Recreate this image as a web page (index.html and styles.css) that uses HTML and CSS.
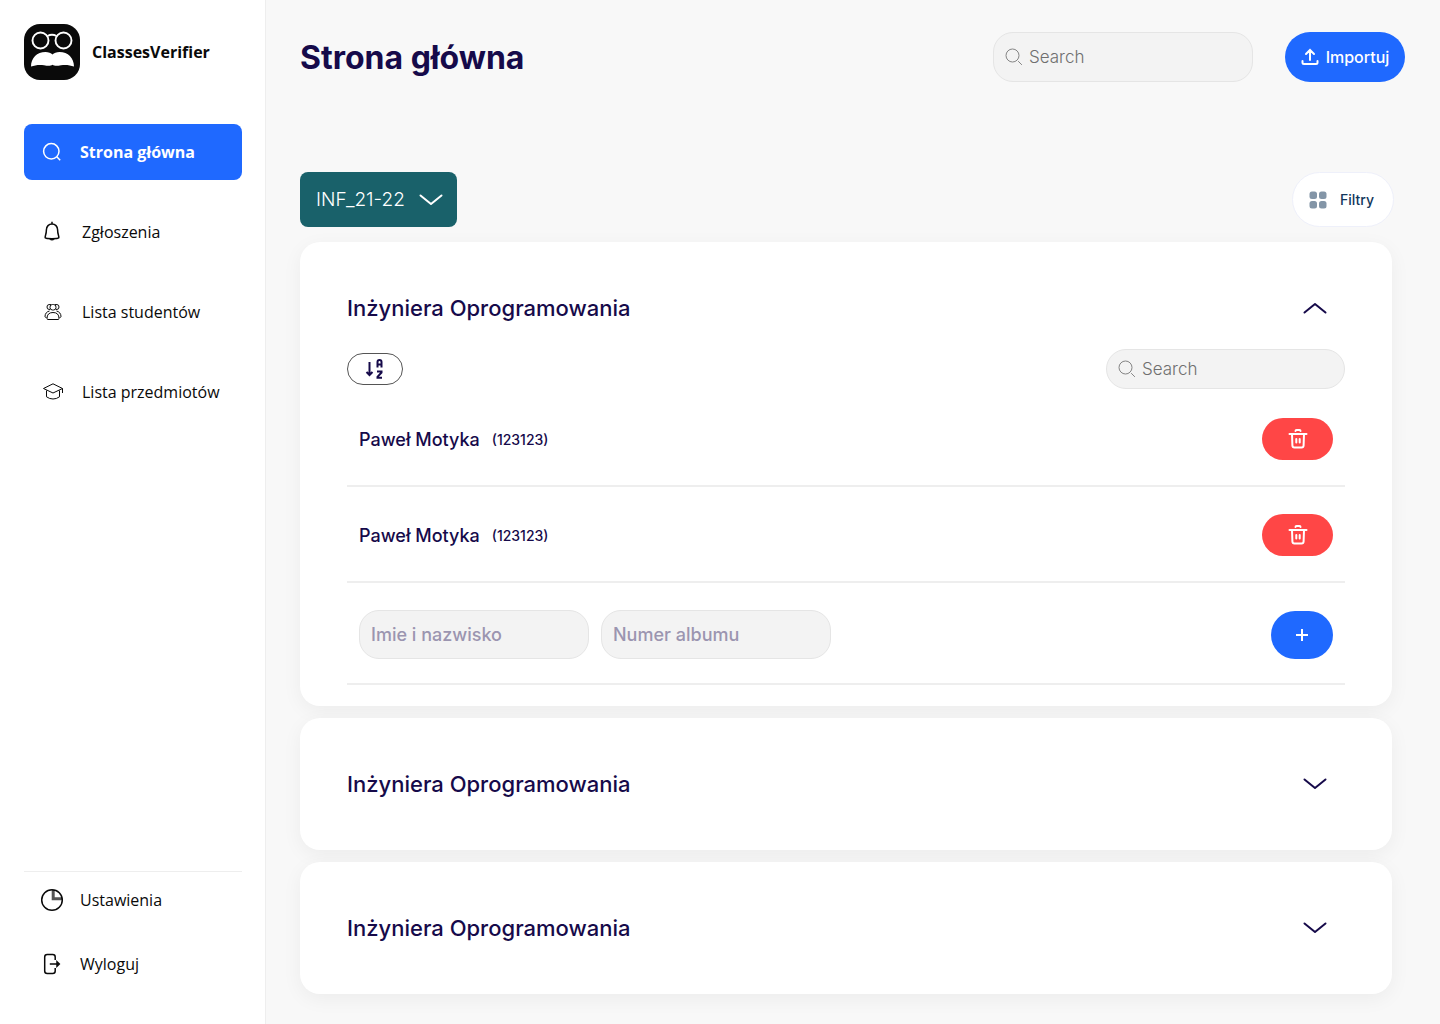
FILE: index.html
```html
<!DOCTYPE html>
<html lang="pl">
<head>
<meta charset="utf-8">
<meta name="viewport" content="width=device-width, initial-scale=1">
<title>ClassesVerifier – Strona główna</title>
<link rel="stylesheet" href="styles.css">
</head>
<body>
<svg class="sprite" aria-hidden="true">
  <symbol id="icon-search" viewBox="0 0 18 18"><circle cx="7.5" cy="7.5" r="6.5"/><path d="M13.200 13.200l3.700 3.700"/></symbol>
  <symbol id="icon-down" viewBox="0 0 24 12"><path d="M1.5 1.5L12 10L22.5 1.5"/></symbol>
  <symbol id="icon-up" viewBox="0 0 24 12"><path d="M1.5 10.5L12 2L22.5 10.5"/></symbol>
  <symbol id="icon-trash" viewBox="0 0 20 20"><path d="M1.500 5h17M7.500 2q0-1 1-1h3q1 0 1 1M4 5l.4 11.500q.1 2 2 2h7.200q1.900 0 2-2L16 5"/><path d="M8.300 10v3.500M11.700 10v3.500"/></symbol>
</svg>
<div class="layout">
  <aside class="sidebar">
    <div class="brand">
      <svg class="brand-logo" viewBox="0 0 56 56" aria-hidden="true">
        <rect width="56" height="56" rx="16" fill="#0a0a0a"/>
        <g fill="none" stroke="#fff" stroke-width="1.900"><circle cx="16.500" cy="16.500" r="8"/><circle cx="39.500" cy="16.500" r="8"/><path d="M23.500 12q4.500-2.600 9 0"/></g>
        <path fill="#fff" d="M7 42.500C7 34 13 28 21.500 28c3 0 5.500 1 7 2.500 1.500-1.500 4-2.500 7-2.500C44 28 50 34 50 42.500c-4-1.500-9-2-13-1.200-4 .7-6.500.9-8.500-.6-2 1.500-4.500 1.300-8.500.6-4-.8-9-.3-13 1.200z"/>
      </svg>
      <span>ClassesVerifier</span>
    </div>
    <nav class="nav">
      <a class="nav-item nav-item-active" href="#home">
        <svg class="nav-icon" viewBox="0 0 24 24"><circle cx="11.300" cy="11.300" r="7.700"/><path d="M16.800 16.800l3.400 3.400"/></svg>
        <span>Strona główna</span>
      </a>
      <a class="nav-item" href="#reports">
        <svg class="nav-icon nav-icon-wide" viewBox="0 0 24 24"><path d="M12 1.800v2M5.200 17.800c-.4-2 1.200-3 1.200-8C6.400 6.500 8.800 3.900 12 3.900s5.600 2.600 5.600 5.900c0 5 1.600 6 1.200 8-1 1.200-12.600 1.200-13.600 0zM9.800 19.200q2.200 1.200 4.400 0"/></svg>
        <span>Zgłoszenia</span>
      </a>
      <a class="nav-item" href="#students">
        <svg class="nav-icon nav-icon-wide nav-icon-thin" viewBox="0 0 24 24"><rect x="10" y="4.500" width="6" height="5.500" rx="2.500"/><path d="M10 9.400H9Q7 9.400 7 7T9 4.600h2M16 9.400h1q2 0 2-2.400t-2-2.400h-2"/><path d="M7 18.500q0-6 6-6t6 6q0 1-1 1H8q-1 0-1-1zM6.500 17.500q-1.500 0-1.500-1c0-2.800 1.800-5 4.500-5.500M19.500 17.500q1.500 0 1.500-1c0-2.800-1.800-5-4.500-5.500"/></svg>
        <span>Lista studentów</span>
      </a>
      <a class="nav-item" href="#subjects">
        <svg class="nav-icon nav-icon-wide nav-icon-thin" viewBox="0 0 24 24"><path d="M3.500 8.500L13 3.800l9.500 4.700L13 13zM22.500 8.500v4.500M6.500 10.500v6.300q3 2.200 6.500 2.200t6.500-2.200v-6.300"/></svg>
        <span>Lista przedmiotów</span>
      </a>
    </nav>
    <nav class="nav-bottom">
      <a class="nav-item" href="#settings">
        <svg class="nav-icon" viewBox="0 0 24 24"><path d="M13.200 2v8.800H22" stroke="#555" stroke-width="3"/><circle cx="12" cy="12" r="10.300"/></svg>
        <span>Ustawienia</span>
      </a>
      <a class="nav-item" href="#logout">
        <svg class="nav-icon" viewBox="0 0 24 24"><path d="M15.200 8V5q0-2.500-2.500-2.500H7.200Q4.700 2.500 4.700 5v14q0 2.500 2.500 2.500h5.500q2.500 0 2.500-2.500v-3M9.800 12H19"/><path d="M17 9.800l2.300 2.200-2.300 2.200z"/></svg>
        <span>Wyloguj</span>
      </a>
    </nav>
  </aside>

  <main class="main">
    <header class="topbar">
      <h1>Strona główna</h1>
      <label class="search search-top">
        <svg class="search-icon" aria-hidden="true"><use href="#icon-search"/></svg>
        <input type="search" placeholder="Search" aria-label="Search">
      </label>
      <button class="import" type="button">
        <svg class="import-icon" viewBox="0 0 18 18" aria-hidden="true"><path d="M9 12V3M5 6l4-4 4 4M1.500 13v1.500q0 1.500 1.500 1.500h12q1.500 0 1.500-1.500V13"/></svg>
        <span>Importuj</span>
      </button>
    </header>

    <div class="content">
      <div class="controls">
        <div class="group">
          <select class="group-select" aria-label="Grupa"><option>INF_21-22</option></select>
          <svg class="chevron group-chevron" aria-hidden="true"><use href="#icon-down"/></svg>
        </div>
        <button class="filters" type="button">
          <svg class="filters-icon" viewBox="0 0 18 18" aria-hidden="true"><rect x="0.500" y="0.500" width="7.500" height="7.500" rx="2.500"/><rect x="10" y="0.500" width="7.500" height="7.500" rx="2.500"/><rect x="0.500" y="10" width="7.500" height="7.500" rx="2.500"/><rect x="10" y="10" width="7.500" height="7.500" rx="2.500"/></svg>
          <span>Filtry</span>
        </button>
      </div>

      <div class="cards">
        <section class="card card-open">
          <div class="card-head">
            <h2>Inżyniera Oprogramowania</h2>
            <button class="toggle" type="button" aria-label="Zwiń" aria-expanded="true"><svg class="chevron"><use href="#icon-up"/></svg></button>
          </div>
          <div class="card-tools">
            <button class="sort" type="button" aria-label="Sortuj A–Z">
              <svg class="sort-icon" viewBox="0 0 20 22"><path d="M4.500 4v13M1.500 14l3 3 3-3M12.500 9.500V4q0-2 2-2t2 2v5.500M12.500 6.500h4M12 13.500h4.500v1l-4 4.300v1H17"/></svg>
            </button>
            <label class="search search-card">
              <svg class="search-icon" aria-hidden="true"><use href="#icon-search"/></svg>
              <input type="search" placeholder="Search" aria-label="Search">
            </label>
          </div>
          <ul class="students">
            <li class="student">
              <span class="name">Paweł Motyka</span><span class="number">(123123)</span>
              <button class="delete" type="button" aria-label="Usuń"><svg class="delete-icon"><use href="#icon-trash"/></svg></button>
            </li>
            <li class="student">
              <span class="name">Paweł Motyka</span><span class="number">(123123)</span>
              <button class="delete" type="button" aria-label="Usuń"><svg class="delete-icon"><use href="#icon-trash"/></svg></button>
            </li>
          </ul>
          <form class="add-form">
            <input class="field" type="text" placeholder="Imie i nazwisko" aria-label="Imie i nazwisko">
            <input class="field" type="text" placeholder="Numer albumu" aria-label="Numer albumu">
            <button class="add" type="button" aria-label="Dodaj"><svg class="add-icon" viewBox="0 0 12 12"><path d="M6 0v12M0 6h12"/></svg></button>
          </form>
        </section>
        <section class="card">
          <div class="card-head">
            <h2>Inżyniera Oprogramowania</h2>
            <button class="toggle" type="button" aria-label="Rozwiń" aria-expanded="false"><svg class="chevron"><use href="#icon-down"/></svg></button>
          </div>
        </section>
        <section class="card">
          <div class="card-head">
            <h2>Inżyniera Oprogramowania</h2>
            <button class="toggle" type="button" aria-label="Rozwiń" aria-expanded="false"><svg class="chevron"><use href="#icon-down"/></svg></button>
          </div>
        </section>
      </div>
    </div>
  </main>
</div>
</body>
</html>
```
FILE: styles.css
```css
* { box-sizing: border-box; }

body {
  margin: 0;
  background: #f8f8f8;
  color: #160a4a;
  font-family: Inter, sans-serif;
}

button, input, select { font: inherit; color: inherit; margin: 0; }
button { border: 0; padding: 0; background: none; cursor: pointer; }
svg { display: block; flex: none; fill: none; stroke: currentColor; }
.sprite { position: absolute; width: 0; height: 0; }

.layout { display: flex; min-height: 100vh; }

/* Sidebar */
.sidebar {
  display: flex;
  flex-direction: column;
  flex: none;
  width: 266px;
  padding: 24px 23px 32px 24px;
  background: #fff;
  border-right: 1px solid #eee;
  color: #0a0a0a;
  font-family: "Open Sans", sans-serif;
  font-size: 16px;
  line-height: 24px;
}
.brand { display: flex; align-items: center; gap: 12px; font-weight: 700; }
.brand-logo { width: 56px; height: 56px; stroke: none; }
.nav { display: flex; flex-direction: column; gap: 24px; margin-top: 44px; }
.nav-item {
  display: flex;
  align-items: center;
  gap: 16px;
  height: 56px;
  padding: 0 16px;
  border-radius: 8px;
  color: inherit;
  text-decoration: none;
}
.nav-item-active { background: #1f69ff; color: #fff; font-weight: 700; }
.nav-icon { width: 24px; height: 24px; stroke-width: 1.5; }
.nav-icon-wide { margin-right: 2px; }
.nav-icon-thin { stroke-width: 1; }
.nav-bottom {
  display: flex;
  flex-direction: column;
  gap: 8px;
  margin-top: auto;
  border-top: 1px solid #eee;
}

/* Top bar */
.main { flex: 1; min-width: 0; }
.topbar { display: flex; align-items: center; padding: 32px 35px 0 34px; }
h1 { margin: 0 auto 0 0; padding-top: 2px; font-size: 32px; font-weight: 700; line-height: 48px; }
.search {
  display: flex;
  align-items: center;
  gap: 6px;
  padding: 0 11px;
  background: #f3f3f3;
  border: 1px solid #e5e5e5;
  border-radius: 20px;
  color: #858585;
}
.search input {
  flex: 1;
  min-width: 0;
  padding: 0;
  border: 0;
  outline: 0;
  background: none;
  font-size: 17px;
  font-weight: 300;
  line-height: 24px;
}
.search input::placeholder { color: #6f6f6f; opacity: 1; }
.search-icon { width: 18px; height: 18px; }
.search-top { width: 260px; height: 50px; }
.search-card { width: 239px; height: 40px; }
.import {
  display: flex;
  align-items: center;
  justify-content: center;
  gap: 7px;
  width: 120px;
  height: 50px;
  margin-left: 32px;
  border-radius: 25px;
  background: #1f69ff;
  color: #fff;
  font-size: 16px;
  font-weight: 500;
}
.import-icon { width: 18px; height: 18px; stroke-width: 2; stroke-linecap: round; }

/* Content */
.content { padding: 90px 46px 30px 34px; }
.controls { display: flex; align-items: center; justify-content: space-between; margin-bottom: 15px; }
.group { display: grid; align-items: center; color: #fff; }
.group-select {
  grid-area: 1 / 1;
  width: 157px;
  height: 55px;
  padding: 0 16px;
  appearance: none;
  border: 0;
  border-radius: 8px;
  background: #19616a;
  font-size: 19px;
  font-weight: 300;
}
.group-chevron { grid-area: 1 / 1; justify-self: end; margin-right: 14px; pointer-events: none; }
.chevron { width: 24px; height: 12px; stroke-width: 2; stroke-linecap: round; stroke-linejoin: round; }
.filters {
  display: flex;
  align-items: center;
  gap: 13px;
  width: 102px;
  height: 55px;
  padding: 0 16px;
  border: 1px solid #eef0fa;
  border-radius: 28px;
  background: #fff;
  color: #12375c;
  font-size: 14px;
  font-weight: 500;
}
.filters-icon { width: 18px; height: 18px; fill: #8395a7; stroke: none; }

.cards { display: flex; flex-direction: column; gap: 12px; margin-right: 2px; }
.card {
  padding: 50px 47px;
  border-radius: 20px;
  background: #fff;
  box-shadow: 0 5px 20px rgba(0, 0, 0, 0.05);
}
.card-open { padding-bottom: 21px; }
.card-head { display: flex; align-items: center; justify-content: space-between; }
h2 { margin: 0; font-size: 22px; font-weight: 500; line-height: 32px; }
.toggle { padding: 0 18px; }
.card-tools { display: flex; align-items: center; justify-content: space-between; margin: 25px 0 2px; }
.sort {
  display: flex;
  align-items: center;
  justify-content: center;
  width: 56px;
  height: 32px;
  border: 1px solid #555;
  border-radius: 16px;
}
.sort-icon { width: 20px; height: 22px; stroke-width: 2; }

.students { margin: 0; padding: 0; list-style: none; }
.student, .add-form {
  display: flex;
  align-items: center;
  gap: 12px;
  padding: 27px 12px 25px;
  border-bottom: 2px solid #eee;
}
.add-form { padding-bottom: 24px; }
.name { font-size: 18px; font-weight: 500; }
.number { font-size: 14px; font-weight: 500; }
.delete {
  display: grid;
  place-items: center;
  width: 71px;
  height: 42px;
  margin-left: auto;
  border-radius: 21px;
  background: #ff4646;
  color: #fff;
}
.delete-icon { width: 20px; height: 20px; stroke-width: 2; stroke-linecap: round; }
.field {
  width: 230px;
  height: 49px;
  padding: 0 11px;
  border: 1px solid #e5e5e5;
  border-radius: 20px;
  background: #f3f3f3;
  font-size: 18px;
  font-weight: 500;
}
.field::placeholder { color: #9b95b0; opacity: 1; }
.add {
  display: grid;
  place-items: center;
  width: 62px;
  height: 48px;
  margin-left: auto;
  border-radius: 24px;
  background: #1f69ff;
  color: #fff;
}
.add-icon { width: 12px; height: 12px; stroke-width: 2; }
```
